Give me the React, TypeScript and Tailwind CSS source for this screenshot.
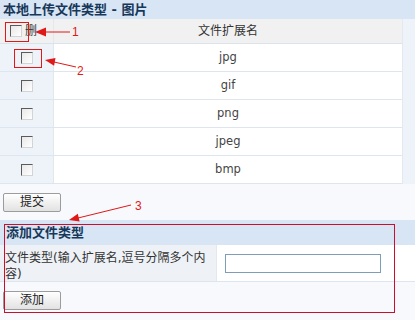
const exts = ["jpg", "gif", "png", "jpeg", "bmp"];

const Check = () => (
  <span className="inline-block w-[12px] h-[12px] border border-t-[#5a5a5a] border-l-[#5a5a5a] border-b-[#d4d4d4] border-r-[#d4d4d4] bg-gradient-to-br from-[#e8e8e8] to-white" />
);

const Btn = ({ label }: { label: string }) => (
  <button className="ml-[3px] w-[58px] h-[19px] border border-[#9c9c9c] rounded-[2px] bg-gradient-to-b from-white to-[#e2e2e2] text-[12px] leading-[17px] text-[#222]">
    {label}
  </button>
);

const Annotations = () => (
  <svg className="absolute inset-0" width="415" height="320" viewBox="0 0 415 320">
    <g fill="none" stroke="#e01818" strokeWidth="1">
      <rect x="5.5" y="22.5" width="23" height="19" />
      <rect x="14.5" y="49.5" width="27" height="18" />
      <rect x="4.5" y="224.5" width="390" height="88" stroke="#c8102e" />
      <line x1="70" y1="32" x2="44" y2="32" />
      <line x1="76" y1="67" x2="54" y2="62" />
      <line x1="131" y1="205" x2="78" y2="218" />
    </g>
    <g fill="#e01818">
      <polygon points="35,32 46,27.5 46,36.5" />
      <polygon points="45,60 54.1,65.7 55.5,57.9" />
      <polygon points="69,220 79.6,221.5 77.8,213.7" />
    </g>
    <g fill="#e01818" fontFamily="Liberation Sans, sans-serif" fontSize="12">
      <text x="72" y="36">1</text>
      <text x="77" y="75">2</text>
      <text x="135" y="210">3</text>
    </g>
  </svg>
);

const App = () => {
  return (
    <div className="relative w-[415px] h-[320px] overflow-hidden bg-[#f8f9fc] text-[12px] text-[#333] font-['DejaVu_Sans','Noto_Sans_CJK_SC',sans-serif]">
      <div className="h-[19px] bg-[#d7e5f4] pl-[3px] leading-[19px] text-[13px] font-bold text-[#17385a]">
        本地上传文件类型 - 图片
      </div>

      <div className="flex bg-[#eef3f9]">
        <div className="w-[403px] border-r border-[#e2e9f1]">
          <div className="grid grid-cols-[54px_1fr] h-[25px] bg-[#f1f1f1] border-b border-[#dae3ec]">
            <div className="flex items-center gap-[3px] pl-[10px] border-r border-[#e4e8ec]">
              <Check />
              <span>删</span>
            </div>
            <div className="flex items-center justify-center">文件扩展名</div>
          </div>
          {exts.map((ext) => (
            <div key={ext} className="grid grid-cols-[54px_1fr] h-[28px] border-b border-[#dde6ef]">
              <div className="flex items-center justify-center bg-[#eef3f9] border-r border-[#e0e7ef]">
                <Check />
              </div>
              <div className="flex items-center justify-center bg-white text-[11.5px] text-[#444]">{ext}</div>
            </div>
          ))}
        </div>
      </div>

      <div className="mt-[9px]">
        <Btn label="提交" />
      </div>

      <div className="mt-[8px]">
        <div className="h-[25px] bg-[#d7e5f4] pl-[6px] leading-[25px] text-[13px] font-bold text-[#17385a]">
          添加文件类型
        </div>
        <div className="flex h-[37px] border-b border-[#dde6ef]">
          <div className="w-[217px] shrink-0 pl-[5px] pr-[8px] pt-[5px] leading-[16px] bg-[#eef2f7] border-r border-[#e2e8ef]">
            文件类型(输入扩展名,逗号分隔多个内容)
          </div>
          <div className="flex-1 flex items-center bg-white">
            <input className="ml-[8px] w-[156px] h-[19px] border border-[#7f9db9] bg-white outline-none" />
          </div>
        </div>
        <div className="mt-[9px]">
          <Btn label="添加" />
        </div>
      </div>

      <Annotations />
    </div>
  );
};

export default App;
